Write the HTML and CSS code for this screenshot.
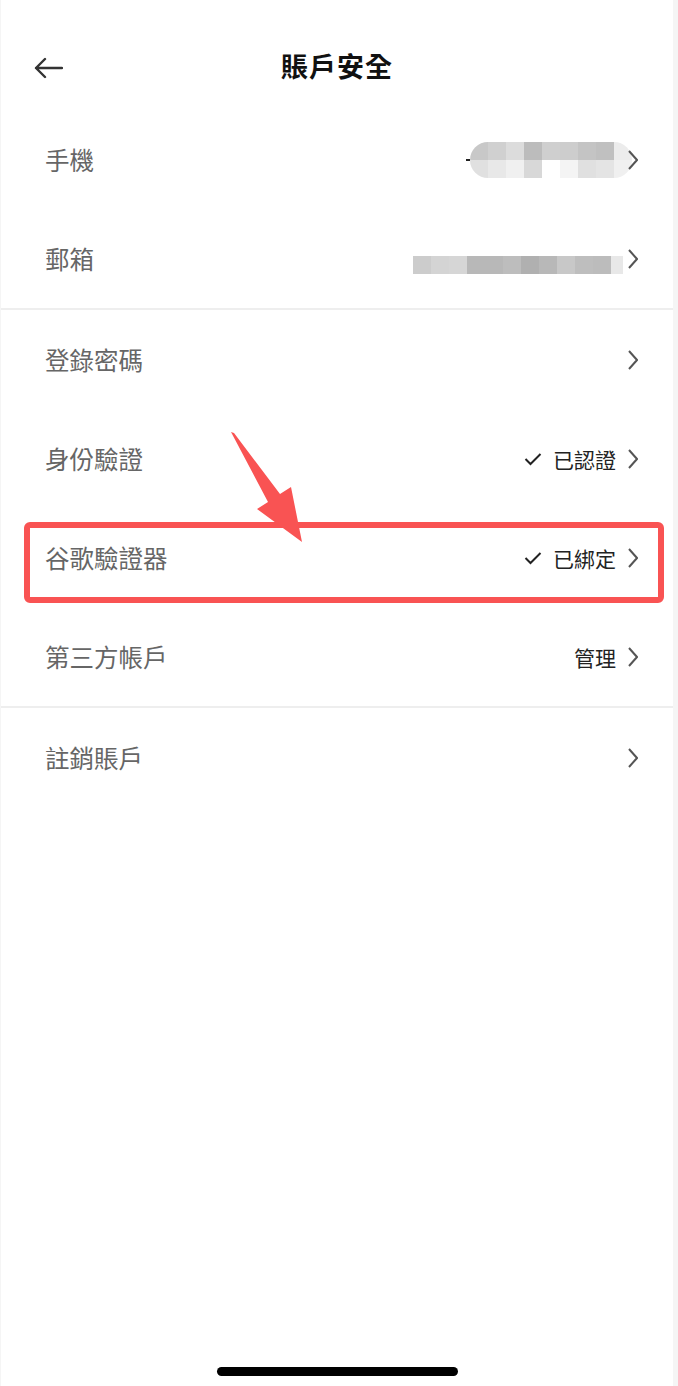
FILE: index.html
```html
<!DOCTYPE html>
<html lang="zh-Hant">
<head>
  <meta charset="UTF-8">
  <meta name="viewport" content="width=device-width, initial-scale=1.0">
  <title>賬戶安全</title>
  <link rel="stylesheet" href="styles.css">
</head>
<body>
  <div class="page">
    <div class="header">
      <svg class="back" width="30" height="22" viewBox="0 0 30 22">
        <path d="M29 11 H3 M12 2 L3 11 L12 20" fill="none" stroke="#333" stroke-width="2.4" stroke-linecap="round" stroke-linejoin="round"/>
      </svg>
      <h1 class="title">賬戶安全</h1>
    </div>

    <div class="group">
      <div class="row">
        <span class="label">手機</span>
        <div class="value">
          <span class="dash"></span>
          <div class="blur blur-phone">
            <i style="background:#c8c8c8"></i><i style="background:#d0d0d0"></i><i style="background:#dcdcdc"></i><i style="background:#bcbcbc"></i><i style="background:#cfcfcf"></i><i style="background:#cdcdcd"></i><i style="background:#c4c4c4"></i><i style="background:#c0c0c0"></i><i style="background:#ececec"></i>
            <i style="background:#e0e0e0"></i><i style="background:#e8e8e8"></i><i style="background:#f0f0f0"></i><i style="background:#d8d8d8"></i><i style="background:#ffffff"></i><i style="background:#f4f4f4"></i><i style="background:#e0e0e0"></i><i style="background:#e4e4e4"></i><i style="background:#f0f0f0"></i>
          </div>
          <svg class="chev" width="10" height="20" viewBox="0 0 10 20"><path d="M1 1 L9 10 L1 19" fill="none" stroke="#555" stroke-width="2"/></svg>
        </div>
      </div>
      <div class="row">
        <span class="label">郵箱</span>
        <div class="value">
          <div class="blur blur-mail">
            <i style="background:#cccccc"></i><i style="background:#d4d4d4"></i><i style="background:#d6d6d6"></i><i style="background:#b8b8b8"></i><i style="background:#b8b8b8"></i><i style="background:#bdbdbd"></i><i style="background:#b0b0b0"></i><i style="background:#b8b8b8"></i><i style="background:#c8c8c8"></i><i style="background:#bebebe"></i><i style="background:#bcbcbc"></i><i style="background:#e8e8e8"></i>
          </div>
          <svg class="chev" width="10" height="20" viewBox="0 0 10 20"><path d="M1 1 L9 10 L1 19" fill="none" stroke="#555" stroke-width="2"/></svg>
        </div>
      </div>
    </div>

    <div class="group">
      <div class="row">
        <span class="label">登錄密碼</span>
        <div class="value">
          <svg class="chev" width="10" height="20" viewBox="0 0 10 20"><path d="M1 1 L9 10 L1 19" fill="none" stroke="#555" stroke-width="2"/></svg>
        </div>
      </div>
      <div class="row">
        <span class="label">身份驗證</span>
        <div class="value">
          <svg class="check" width="18" height="14" viewBox="0 0 18 14"><path d="M1.5 7 L6.5 12 L16.5 2" fill="none" stroke="#222" stroke-width="2"/></svg>
          <span class="status">已認證</span>
          <svg class="chev" width="10" height="20" viewBox="0 0 10 20"><path d="M1 1 L9 10 L1 19" fill="none" stroke="#555" stroke-width="2"/></svg>
        </div>
      </div>
      <div class="row">
        <span class="label">谷歌驗證器</span>
        <div class="value">
          <svg class="check" width="18" height="14" viewBox="0 0 18 14"><path d="M1.5 7 L6.5 12 L16.5 2" fill="none" stroke="#222" stroke-width="2"/></svg>
          <span class="status">已綁定</span>
          <svg class="chev" width="10" height="20" viewBox="0 0 10 20"><path d="M1 1 L9 10 L1 19" fill="none" stroke="#555" stroke-width="2"/></svg>
        </div>
      </div>
      <div class="row">
        <span class="label">第三方帳戶</span>
        <div class="value">
          <span class="status">管理</span>
          <svg class="chev" width="10" height="20" viewBox="0 0 10 20"><path d="M1 1 L9 10 L1 19" fill="none" stroke="#555" stroke-width="2"/></svg>
        </div>
      </div>
    </div>

    <div class="group group-last">
      <div class="row">
        <span class="label">註銷賬戶</span>
        <div class="value">
          <svg class="chev" width="10" height="20" viewBox="0 0 10 20"><path d="M1 1 L9 10 L1 19" fill="none" stroke="#555" stroke-width="2"/></svg>
        </div>
      </div>
    </div>

    <!-- annotation drawn over the list -->
    <svg class="annot" width="678" height="620" viewBox="0 0 678 620">
      <rect x="27" y="525" width="634" height="75" rx="3" fill="none" stroke="#f95353" stroke-width="6"/>
      <polygon points="231,432 234,433 280,494 291,487 302,542 257,509 268,502" fill="#f95353"/>
    </svg>

    <div class="home-bar"></div>
  </div>
</body>
</html>
```

FILE: styles.css
```css
* {
  box-sizing: border-box;
}

body {
  margin: 0;
  background: #f5f5f5;
  font-family: "Noto Sans CJK TC", "Noto Sans", sans-serif;
}

.page {
  position: relative;
  width: 672px;
  min-height: 1386px;
  margin-left: 1px;
  background: #fff;
  display: flex;
  flex-direction: column;
}

.header {
  height: 110px;
  padding-top: 22px;
  position: relative;
  display: flex;
  align-items: flex-start;
  justify-content: center;
}

.back {
  position: absolute;
  left: 32px;
  top: 57px;
}

.title {
  margin: 0;
  height: 88px;
  line-height: 88px;
  font-size: 27px;
  font-weight: 700;
  color: #111;
  letter-spacing: 1px;
}

.group {
  border-bottom: 2px solid #eeeeee;
}

.group-last {
  border-bottom: none;
}

.row {
  height: 99px;
  padding: 0 35px 0 44px;
  display: flex;
  align-items: center;
  justify-content: space-between;
}

.label {
  font-size: 24.5px;
  color: #666;
}

.value {
  display: flex;
  align-items: center;
}

.check {
  margin-right: 11px;
}

.status {
  font-size: 21px;
  color: #222;
  margin-right: 12px;
}

.chev {
  display: block;
}

.dash {
  width: 4px;
  height: 2px;
  background: #222;
}

.blur {
  display: grid;
  grid-auto-rows: 18px;
}

.blur i {
  display: block;
}

.blur-phone {
  grid-template-columns: repeat(9, 18px);
  border-radius: 18px;
  overflow: hidden;
  margin-right: -4px;
}

.blur-mail {
  grid-template-columns: repeat(11, 18px) 12px;
  margin-top: 12px;
  margin-right: 5px;
}

.annot {
  position: absolute;
  left: -1px;
  top: 0;
  pointer-events: none;
}

.home-bar {
  position: absolute;
  left: 216px;
  bottom: 10px;
  width: 241px;
  height: 9px;
  border-radius: 5px;
  background: #000;
}
```
